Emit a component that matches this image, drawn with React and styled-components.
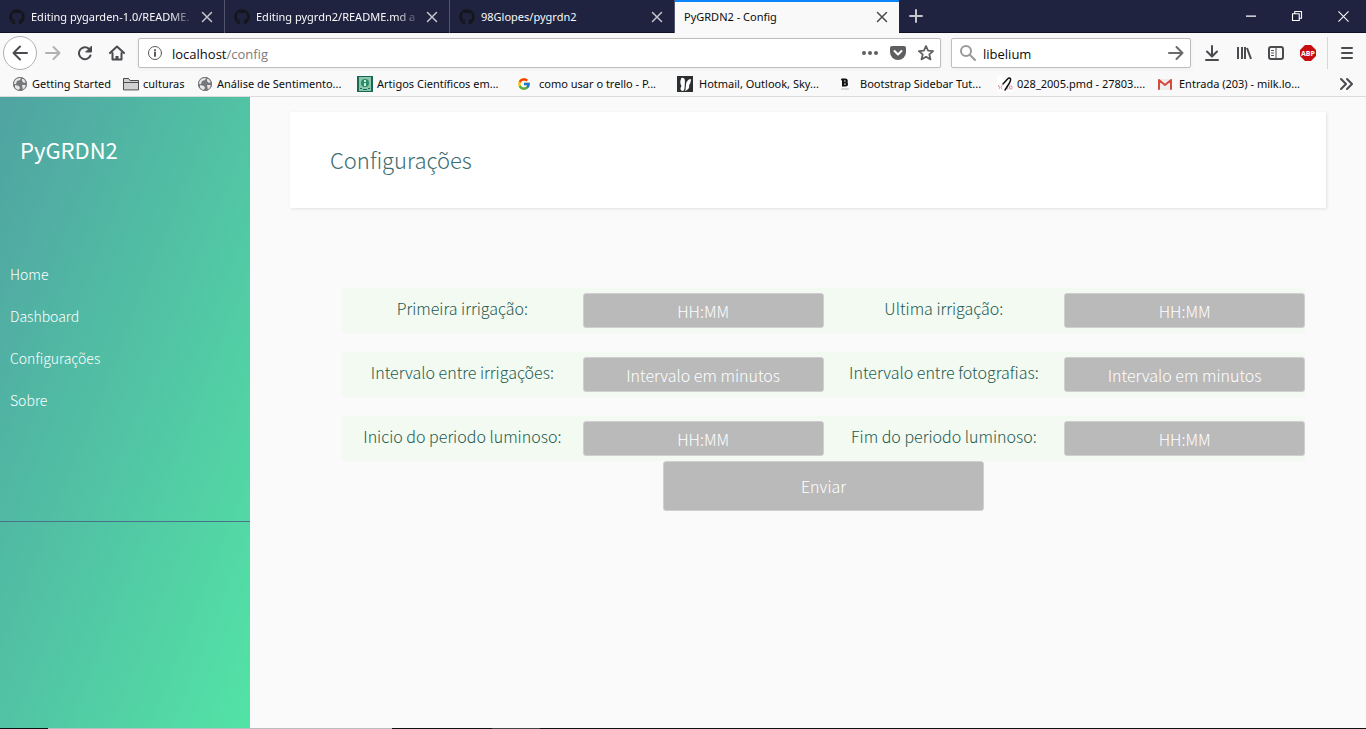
import React from 'react';
import styled, { createGlobalStyle, css } from 'styled-components';
import { FaGithub } from 'react-icons/fa';
import { FcGoogle } from 'react-icons/fc';

const ui = '"Noto Sans", "Open Sans", sans-serif';
const site = '"Noto Sans CJK JP", "Noto Sans", sans-serif';

const Global = createGlobalStyle`
  *, *::before, *::after { box-sizing: border-box; }
  html, body, #root { height: 100%; }
  body { margin: 0; background: #fafafa; font-family: ${site}; }
  button, input { font: inherit; margin: 0; }
  a { color: inherit; text-decoration: none; }
  ul { list-style: none; margin: 0; padding: 0; }
  svg { display: block; flex: none; }
`;

const Window = styled.div`
  display: flex;
  flex-direction: column;
  min-height: 100%;
`;

/* Browser chrome */
const TabStrip = styled.header`
  display: flex;
  height: 33px;
  background: #202340;
  border-bottom: 1px solid #0f1126;
  font: 11px/32px ${ui};
  color: #f9f9fa;
`;

const Tab = styled.div`
  display: flex;
  align-items: center;
  gap: 6px;
  width: 225px;
  height: 33px;
  padding: 0 11px 0 9px;
  border-right: 1px solid #53556c;
  ${(p) => p.$active && css`
    width: 224px;
    padding-bottom: 2px;
    background: #f9f9fa;
    color: #0c0c0d;
    border-right: 0;
    border-top: 2px solid #0a84ff;
    line-height: 28px;
  `}
`;

const TabTitle = styled.span`
  flex: 1;
  min-width: 0;
  white-space: nowrap;
  ${(p) => p.$fade && css`mask-image: linear-gradient(to left, transparent, #000 24px);`}
`;

const IconButton = styled.button`
  display: flex;
  align-items: center;
  justify-content: center;
  flex: none;
  width: ${(p) => p.$w || 32}px;
  height: ${(p) => p.$h || 32}px;
  padding: 0;
  border: 0;
  background: none;
  color: ${(p) => p.$color || '#4a4a4f'};
`;

const WindowControls = styled.div`
  display: flex;
  margin-left: auto;
`;

const Toolbar = styled.div`
  display: flex;
  align-items: center;
  height: 40px;
  padding: 0 3px;
  background: #f9f9fa;
`;

const BackButton = styled(IconButton)`
  border: 1px solid #b1b1b3;
  border-radius: 50%;
  background: #fff;
`;

const Field = styled.div`
  display: flex;
  align-items: center;
  height: 30px;
  background: #fff;
  border: 1px solid #bebebf;
  border-radius: 2px;
  box-shadow: 0 1px 4px rgba(0, 0, 0, 0.05);
  font: 13px/28px "Open Sans", sans-serif;
  color: #0c0c0d;
`;

const AddressBar = styled(Field)`
  flex: 1;
  margin-left: 5px;
  padding: 0 0 0 8px;
`;

const Address = styled.div`
  flex: 1;
  margin-left: 9px;
  padding-top: 2px;
  line-height: 26px;
  span { color: #7c7c7e; }
`;

const SearchBar = styled(Field)`
  width: 240px;
  margin: 0 5px 0 10px;
  padding: 0 0 0 8px;
`;

const SearchInput = styled.input`
  flex: 1;
  min-width: 0;
  margin-left: 7px;
  padding: 2px 0 0;
  border: 0;
  outline: 0;
  background: none;
  color: inherit;
`;

const MenuArea = styled.div`
  margin-left: 3px;
  border-left: 1px solid #d7d7db;
  padding-left: 3px;
`;

const Bookmarks = styled.nav`
  display: flex;
  align-items: center;
  height: 24px;
  padding: 0 4px 2px 12px;
  background: #f9f9fa;
  border-bottom: 1px solid #dcdcdd;
  font: 11px/20px ${ui};
  color: #0c0c0d;
`;

const Bookmark = styled.a`
  display: flex;
  align-items: center;
  gap: ${(p) => p.$gap || 4}px;
  flex: none;
  width: ${(p) => p.$w}px;
  white-space: nowrap;
`;

/* Site */
const Page = styled.div`
  display: flex;
  flex: 1;
`;

const Sidebar = styled.aside`
  flex: none;
  width: 250px;
  background: linear-gradient(to bottom right, #50a3a2, #53e3a6);
  color: #fff;
`;

const Brand = styled.h3`
  margin: 0;
  padding: 34px 20px 0;
  font-size: 22px;
  line-height: 36px;
  font-weight: 400;
`;

const Menu = styled.ul`
  margin-top: 86px;
  padding-bottom: 100px;
  border-bottom: 1px solid #47748b;
`;

const MenuLink = styled.a`
  display: block;
  padding: 10px;
  font-size: 14px;
  line-height: 22px;
  font-weight: 300;
`;

const Content = styled.main`
  flex: 1;
  min-width: 0;
  padding: 15px 40px 40px;
`;

const Heading = styled.div`
  padding: 29px 40px 31px;
  background: #fff;
  box-shadow: 1px 1px 3px rgba(0, 0, 0, 0.1);
`;

const Title = styled.h2`
  margin: 0;
  font-size: 22px;
  line-height: 36px;
  font-weight: 300;
  color: #3c6c70;
`;

const Form = styled.form`
  display: flex;
  flex-direction: column;
  align-items: center;
  margin: 80px 21px 0 52px;
  font-size: 16px;
  font-weight: 300;
`;

const FormRow = styled.div`
  display: grid;
  grid-template-columns: repeat(4, 1fr);
  align-items: center;
  width: 100%;
  height: 45px;
  margin-bottom: ${(p) => (p.$last ? 0 : 19)}px;
  background: #f2faf2;
`;

const Label = styled.label`
  padding-bottom: 6px;
  text-align: center;
  line-height: 24px;
  color: #24594e;
`;

const control = css`
  border: 1px solid #cfcfcf;
  border-radius: 3px;
  background: #bababa;
  color: #fff;
  text-align: center;
`;

const Input = styled.input`
  ${control}
  width: 100%;
  height: 35px;
  padding: 0 8px;
  &::placeholder { color: #fff; opacity: 1; }
`;

const Submit = styled.button`
  ${control}
  width: calc(100% / 3);
  height: 50px;
`;

const Taskbar = styled.footer`
  height: 1px;
  background: linear-gradient(to right, #111 48px, #bdbdbd 48px, #bdbdbd 392px, #111 392px, #111 492px, #444 492px, #444 540px, #111 540px);
`;

const Svg = ({ s = 16, children, w = 2, ...rest }) => (
  <svg width={s} height={s} viewBox="0 0 16 16" fill="none" stroke="currentColor" strokeWidth={w}
    strokeLinecap="round" strokeLinejoin="round" aria-hidden="true" {...rest}>{children}</svg>
);

const Close = () => <Svg s={12} w={2}><path d="M2 2l12 12M14 2L2 14" /></Svg>;
const Arrow = ({ flip }) => (
  <Svg><path d={flip ? 'M15 8H1.500M8 1.500L1.500 8L8 14.500' : 'M1 8H14.500M8.500 2L14.500 8L8.500 14'} /></Svg>
);
const Globe = () => (
  <Svg w={0}>
    <circle cx="8" cy="8" r="7" fill="#77787b" />
    <path fill="#e8e8e8" d="M2 5l3-3 4 0-1 2-3 1-1 3-2 0zM10 3l2 0 2 3-2 1-2-2zM3 9l4 1 1 2-2 3-3-3zM10 9l4 0-1 4-2 1z" />
    <circle cx="8" cy="8" r="6.500" stroke="#77787b" strokeWidth="1" />
  </Svg>
);
const Folder = () => (
  <Svg w={1} stroke="#4a4a4f"><path fill="#d0d0d0" d="M.5 13.500V2.500h5l1.500 2h8.500v9zM.5 6.500h15" /></Svg>
);
const Article = () => (
  <Svg w={0}>
    <path fill="#17695a" d="M0 0h16v16H0z" /><path fill="#8cc5a8" d="M2 1h12v14H2z" />
    <circle cx="8" cy="7" r="4" fill="#2a8b68" /><path fill="#c8ead9" d="M7 4h2v2H7zM7 7h2v3H7z" />
    <path fill="#17695a" d="M3 12h2v1H3zM6 13h4v1H6zM11 12h2v1h-2z" />
  </Svg>
);
const Butterfly = () => (
  <Svg w={0}>
    <path fill="#2b2f31" d="M0 0h16v16H0z" />
    <path fill="#fff" d="M4 3c0-2 4-2 4 2v4c0 3 0 5-2 6-3 0-3-3-1.500-5C3 8 3 5 4 3z" />
    <path fill="#fff" d="M9 9c0-3 2-6 5-6 0 3-1 5-2 6.500 1 2-1 4.500-4 5.500 0-2 0-4 1-6z" />
    <path stroke="#2b2f31" strokeWidth="1" d="M8.500 4.500L8 14" />
  </Svg>
);
const BoldB = () => (
  <Svg strokeLinejoin="miter">
    <path stroke="#111" d="M6 3.500v6h2.500a1.500 1.500 0 0 0 0-3H6h2.300a1.500 1.500 0 0 0 0-3H5" />
    <path stroke="#b5b5b5" strokeWidth="1" d="M4.500 13h7" />
  </Svg>
);
const Scielo = () => (
  <Svg w={1}>
    <path fill="#fff" stroke="none" d="M0 0h16v16H0z" />
    <path stroke="#e59aa2" d="M2 9l-1 1 2 1-1 2M5 9.500l-1 2 1 1.500M10 10v3h1M13 10h2v3h-2z" />
    <path stroke="#111" strokeWidth="1.500" d="M8 14l4.500-7c2.500-5 .5-6-2-4L6 8" />
  </Svg>
);
const Mail = () => (
  <Svg w={0}><path fill="#eee" d="M1 3h14v11H1z" /><path stroke="#d54b3d" strokeWidth="2" d="M2 13V4l6 5 6-5v9" /></Svg>
);

const tabs = [
  { title: 'Editing pygarden-1.0/README.', fade: true },
  { title: 'Editing pygrdn2/README.md a', fade: true },
  { title: '98Glopes/pygrdn2' },
];

const bookmarks = [
  { text: 'Getting Started', icon: <Globe />, w: 111 },
  { text: 'culturas', icon: <Folder />, w: 74 },
  { text: 'Análise de Sentimento...', icon: <Globe />, w: 160 },
  { text: 'Artigos Científicos em...', icon: <Article />, w: 160 },
  { text: 'como usar o trello - P...', icon: <FcGoogle size={14} />, w: 160, gap: 8 },
  { text: 'Hotmail, Outlook, Sky...', icon: <Butterfly />, w: 160, gap: 6 },
  { text: 'Bootstrap Sidebar Tut...', icon: <BoldB />, w: 160, gap: 7 },
  { text: '028_2005.pmd - 27803....', icon: <Scielo />, w: 160 },
  { text: 'Entrada (203) - milk.lo...', icon: <Mail />, w: 160, gap: 6 },
];

const rows = [
  [['inicio', 'Primeira irrigação:', 'HH:MM'], ['ultima', 'Ultima irrigação:', 'HH:MM']],
  [['intervalo', 'Intervalo entre irrigações:', 'Intervalo em minutos'], ['fotos', 'Intervalo entre fotografias:', 'Intervalo em minutos']],
  [['luzInicio', 'Inicio do periodo luminoso:', 'HH:MM'], ['luzFim', 'Fim do periodo luminoso:', 'HH:MM']],
];

export default function App() {
  return (
    <Window>
      <Global />
      <TabStrip>
        {tabs.map((t) => (
          <Tab key={t.title}>
            <FaGithub size={16} color="#15161c" />
            <TabTitle $fade={t.fade}>{t.title}</TabTitle>
            <IconButton $w={12} $color="#c5c5cc" aria-label="Close tab"><Close /></IconButton>
          </Tab>
        ))}
        <Tab $active>
          <TabTitle>PyGRDN2 - Config</TabTitle>
          <IconButton $w={12} $h={28} aria-label="Close tab"><Close /></IconButton>
        </Tab>
        <IconButton $w={34} $color="#c5c5cc" aria-label="New tab"><Svg><path d="M8 2v12M2 8h12" /></Svg></IconButton>
        <WindowControls>
          <IconButton $w={46} $color="#fff" aria-label="Minimize"><Svg s={10} w={2}><path d="M0 8h16" /></Svg></IconButton>
          <IconButton $w={46} $color="#fff" aria-label="Restore"><Svg s={12} w={1.5}><path d="M2 5h9v9H2zM5 5V2h9v9h-3" /></Svg></IconButton>
          <IconButton $w={46} $color="#fff" aria-label="Close"><Svg s={11} w={1.5}><path d="M1 1l14 14M15 1L1 15" /></Svg></IconButton>
        </WindowControls>
      </TabStrip>
      <Toolbar>
        <BackButton $w={34} $h={34} aria-label="Back"><Arrow flip /></BackButton>
        <IconButton $color="#b1b1b3" aria-label="Forward"><Arrow /></IconButton>
        <IconButton aria-label="Reload"><Svg><path d="M13.500 10.500A6 6 0 1 1 12 3.800L13 5" /><path fill="currentColor" strokeWidth="1" d="M14.500 1.500v5.500H9z" /></Svg></IconButton>
        <IconButton aria-label="Home"><Svg><path d="M1 8l7-6.500L15 8M3.500 8v6.500h9V8" /><path d="M8 14v-3" strokeWidth="3" strokeLinecap="butt" /></Svg></IconButton>
        <AddressBar>
          <Svg w={1} color="#5a5a5c"><circle cx="8" cy="8" r="6.500" /><path d="M8 7.500v3.500M8 5v.2" strokeWidth="2" /></Svg>
          <Address>localhost<span>/config</span></Address>
          <IconButton $w={28} $h={28} $color="#5f5f61" aria-label="Page actions"><Svg w={0} fill="currentColor"><circle cx="2" cy="8" r="2" /><circle cx="8" cy="8" r="2" /><circle cx="14" cy="8" r="2" /></Svg></IconButton>
          <IconButton $w={28} $h={28} $color="#5f5f61" aria-label="Pocket"><Svg><path fill="currentColor" stroke="none" d="M2 1h12a2 2 0 0 1 2 2v4a8 8 0 0 1-16 0V3a2 2 0 0 1 2-2z" /><path stroke="#fff" d="M4.500 6L8 9.500L11.500 6" /></Svg></IconButton>
          <IconButton $w={28} $h={28} $color="#5f5f61" aria-label="Bookmark"><Svg w={1.8}><path d="M8 1l2.100 4.600 5 .5-3.800 3.300 1.200 5L8 11.800 3.500 14.400l1.200-5L.9 6.100l5-.5z" /></Svg></IconButton>
        </AddressBar>
        <SearchBar>
          <Svg color="#99999b"><circle cx="6" cy="6" r="5" /><path d="M10 10l5 5" /></Svg>
          <SearchInput aria-label="Search" defaultValue="libelium" />
          <IconButton $w={28} $h={28} $color="#6a6a6c" aria-label="Go"><Arrow /></IconButton>
        </SearchBar>
        <IconButton aria-label="Downloads"><Svg><path d="M8 1v10M3 6.500L8 11.500L13 6.500M2 15h12" /></Svg></IconButton>
        <IconButton aria-label="Library"><Svg strokeLinecap="butt"><path d="M2 2v12M6 2v12M9 2v12M11 3l4 11" /></Svg></IconButton>
        <IconButton aria-label="Sidebar"><Svg><rect x="1" y="2" width="14" height="12" rx="2" /><path d="M8 2v12M3.500 5.500h2M3.500 8h2M3.500 10.500h2" strokeWidth="1" /></Svg></IconButton>
        <IconButton aria-label="Adblock Plus"><Svg w={0}><path fill="#c70d12" d="M5 0h6l5 5v6l-5 5H5l-5-5V5z" /><text x="8" y="11" textAnchor="middle" fill="#fff" fontFamily="Open Sans" fontWeight="700" fontSize="7">ABP</text></Svg></IconButton>
        <MenuArea><IconButton aria-label="Menu"><Svg><path d="M3 3h10M3 8h10M3 13h10" /></Svg></IconButton></MenuArea>
      </Toolbar>
      <Bookmarks>
        {bookmarks.map((b) => <Bookmark key={b.text} href="#" $w={b.w} $gap={b.gap}>{b.icon}{b.text}</Bookmark>)}
        <WindowControls><IconButton $h={20} aria-label="More bookmarks"><Svg><path d="M3 3l5 5-5 5M9 3l5 5-5 5" /></Svg></IconButton></WindowControls>
      </Bookmarks>
      <Page>
        <Sidebar>
          <Brand>PyGRDN2</Brand>
          <Menu>
            {['Home', 'Dashboard', 'Configurações', 'Sobre'].map((m) => <li key={m}><MenuLink href="#">{m}</MenuLink></li>)}
          </Menu>
        </Sidebar>
        <Content>
          <Heading><Title>Configurações</Title></Heading>
          <Form>
            {rows.map((row, i) => (
              <FormRow key={i} $last={i === rows.length - 1}>
                {row.map(([id, label, hint]) => (
                  <React.Fragment key={id}>
                    <Label htmlFor={id}>{label}</Label>
                    <Input id={id} placeholder={hint} />
                  </React.Fragment>
                ))}
              </FormRow>
            ))}
            <Submit type="button">Enviar</Submit>
          </Form>
        </Content>
      </Page>
      <Taskbar />
    </Window>
  );
}
